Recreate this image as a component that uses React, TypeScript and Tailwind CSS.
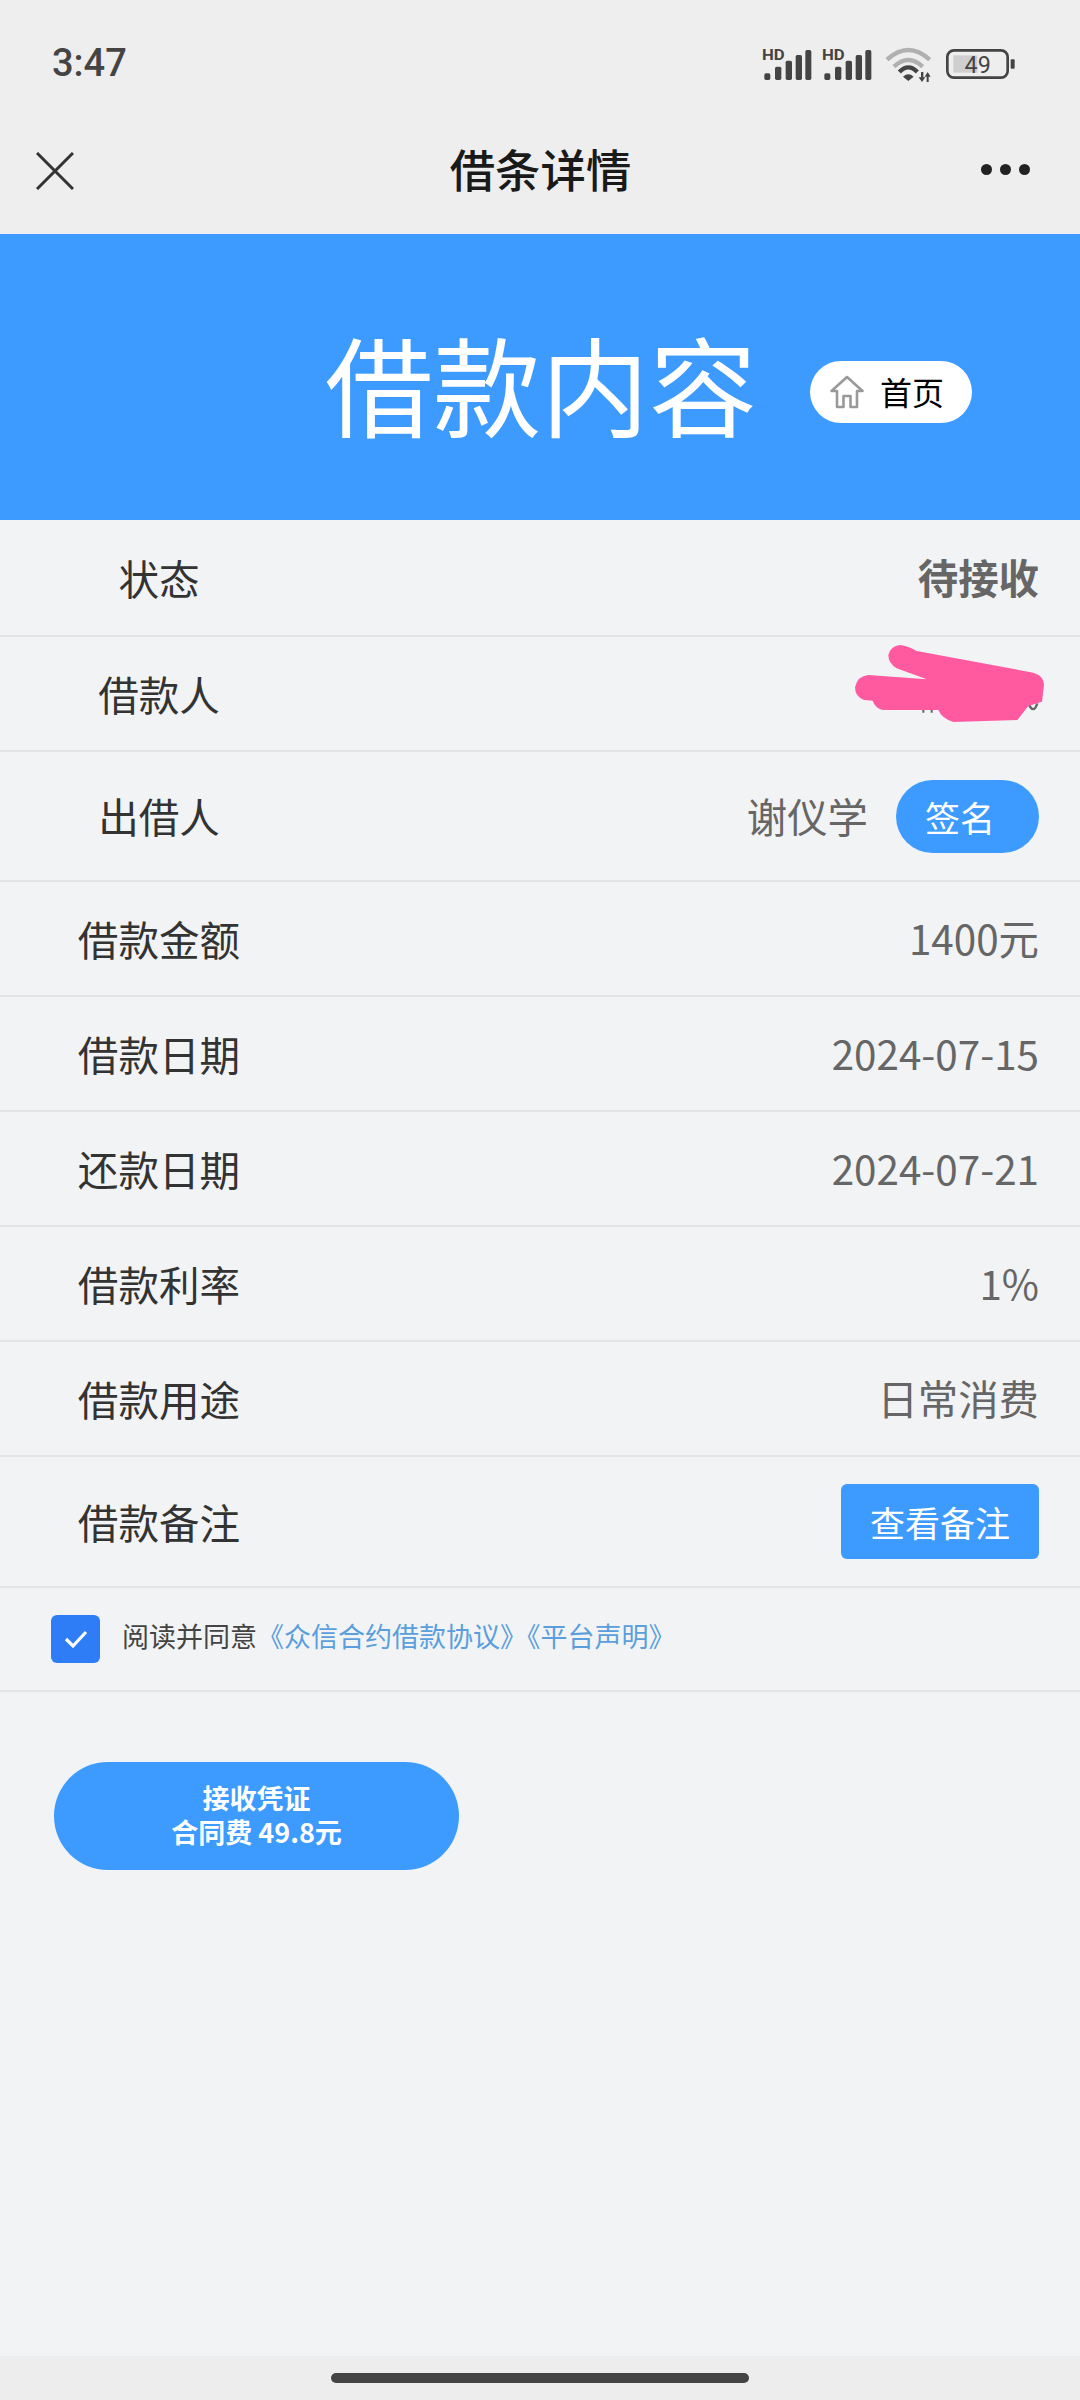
const FONT = '"Noto Sans CJK SC", "Noto Sans", sans-serif';

function StatusIcons() {
  const bars = (o: number) => (
    <g fill="#444">
      <rect x={o + 73} y={130} width={18} height={20} rx={5} />
      <rect x={o + 105} y={110} width={19} height={40} rx={5} />
      <rect x={o + 137} y={92} width={19} height={58} rx={5} />
      <rect x={o + 167} y={75} width={19} height={75} rx={5} />
      <rect x={o + 196} y={60} width={18} height={90} rx={5} />
      <text x={o + 66} y={90} fontSize={46} fontWeight={700} fontFamily="Roboto, sans-serif" textLength={68} lengthAdjust="spacingAndGlyphs">HD</text>
    </g>
  );
  return (
    <svg width={300} height={70} viewBox="0 0 900 210" className="shrink-0">
      {bars(0)}
      {bars(180)}
      <g fill="none" strokeLinecap="butt">
        <path d="M441 89 Q505 31 569 89" stroke="#b0b0b0" strokeWidth={13} />
        <path d="M462 110 Q505 70 548 110" stroke="#b0b0b0" strokeWidth={13} />
        <path d="M478 126 Q505 98 532 126" stroke="#444" strokeWidth={13} />
      </g>
      <path d="M489 140 Q505 126 521 140 L505 153 Z" fill="#444" />
      <path d="M543 126 H550 V142 H556 L546 156 L536 142 H543 Z" fill="#444" />
      <path d="M560 156 H566 V140 H572 L563 126 L554 140 H560 Z" fill="#444" />
      <rect x={622} y={61} width={181} height={82} rx={20} fill="none" stroke="#444" strokeWidth={8} />
      <rect x={640} y={76} width={72} height={52} fill="#cfcfcf" />
      <rect x={812} y={88} width={12} height={28} rx={3} fill="#444" />
      <text x={713} y={128} textAnchor="middle" fontSize={70} fill="#444" fontFamily="Roboto, sans-serif">49</text>
    </svg>
  );
}

function Row({ label, children, h = "h-[115px]" }: { label: string; children: React.ReactNode; h?: string }) {
  return (
    <div className={`flex items-center border-b-2 border-[#e3e4e6] ${h}`}>
      <div className="w-[318px] pt-[1px] text-center text-[40.6px] leading-none text-[#333333]">{label}</div>
      <div className="flex flex-1 items-center justify-end pr-[41px] text-[40.4px] leading-none text-[#666666]">
        {children}
      </div>
    </div>
  );
}

export default function App() {
  return (
    <div className="relative flex h-[2400px] w-[1080px] flex-col overflow-hidden bg-[#f2f3f5]" style={{ fontFamily: FONT }}>
      <div className="flex h-[234px] flex-col bg-[#eeeeee]">
        <div className="flex h-[115px] items-start justify-between pl-[52px] pr-[40px] pt-[30px]">
          <span className="text-[38px] font-medium leading-[66px] text-[#444444]" style={{ fontFamily: "Roboto, sans-serif" }}>3:47</span>
          <StatusIcons />
        </div>
        <div className="flex h-[119px] items-start pl-[36px] pr-[50px] pt-[37px]">
          <div className="flex-1">
            <svg width={38} height={38} viewBox="0 0 38 38" fill="none" stroke="#333" strokeWidth={3}>
              <path d="M1 1 L37 37 M37 1 L1 37" />
            </svg>
          </div>
          <span className="-mt-[17px] ml-[15px] text-[45.4px] font-medium leading-[66px] text-[#1a1a1a]">借条详情</span>
          <div className="mt-[12px] flex flex-1 justify-end gap-[8px]">
            <span className="h-[11px] w-[11px] rounded-full bg-[#222222]" />
            <span className="h-[11px] w-[11px] rounded-full bg-[#222222]" />
            <span className="h-[11px] w-[11px] rounded-full bg-[#222222]" />
          </div>
        </div>
      </div>

      <div className="flex h-[286px] items-center bg-[#3d9bff] pl-[325px]">
        <span className="mt-[10px] text-[108px] leading-none text-white">借款内容</span>
        <div className="ml-[53px] mt-[30px] flex h-[62px] w-[162px] items-center rounded-full bg-white pl-[20px]">
          <svg width={34} height={34} viewBox="0 0 34 34" fill="none" stroke="#999" strokeWidth={2.6} strokeLinejoin="round">
            <path d="M1.5 16 L17 2 L32.5 16 H27 V32 H20.5 V21 H13.5 V32 H7 V16 Z" />
          </svg>
          <span className="-mt-[2px] ml-[16px] text-[32px] leading-none text-black">首页</span>
        </div>
      </div>

      <div className="flex flex-col">
        <Row label="状态" h="h-[117px]"><span className="font-bold">待接收</span></Row>
        <Row label="借款人"><span /></Row>
        <Row label="出借人" h="h-[130px]">
          <span>谢仪学</span>
          <span className="ml-[28px] flex h-[73px] w-[143px] items-center rounded-full bg-[#3d9bff] pl-[29px] text-[35px] text-white">签名</span>
        </Row>
        <Row label="借款金额">1400元</Row>
        <Row label="借款日期">2024-07-15</Row>
        <Row label="还款日期">2024-07-21</Row>
        <Row label="借款利率">1%</Row>
        <Row label="借款用途">日常消费</Row>
        <Row label="借款备注" h="h-[131px]">
          <span className="flex h-[75px] w-[198px] items-center justify-center rounded-[6px] bg-[#3d9bff] text-[35px] text-white">查看备注</span>
        </Row>
        <div className="flex h-[104px] items-center border-b-2 border-[#e3e4e6] pl-[51px]">
          <div className="flex h-[48px] w-[49px] items-center justify-center rounded-[6px] bg-[#2e7cf6]">
            <svg width={24} height={20} viewBox="0 0 24 20" fill="none" stroke="#fff" strokeWidth={3.2}>
              <path d="M2 10 L9 17 L22 3" />
            </svg>
          </div>
          <span className="-mt-[8px] ml-[22px] text-[27px] leading-none text-[#444444]">阅读并同意</span>
          <span className="-mt-[8px] text-[27px] leading-none text-[#5a9fdc]">《众信合约借款协议》《平台声明》</span>
        </div>
      </div>

      <div className="ml-[54px] mt-[70px] flex h-[108px] w-[405px] items-center justify-center rounded-full bg-[#3d9bff] pb-[3px] text-center text-[27px] font-semibold leading-[34px] text-white">
        <span>
          接收凭证
          <br />
          合同费 49.8元
        </span>
      </div>

      <div className="mt-auto flex h-[44px] items-start justify-center bg-[#ededed] pt-[17px]">
        <div className="h-[10px] w-[418px] rounded-full bg-[#444444]" />
      </div>

      <svg className="absolute left-[760px] top-[340px]" width={320} height={400} viewBox="0 0 960 1200">
        <path d="M805 1090 Q820 1125 832 1090" fill="none" stroke="#666" strokeWidth={7} />
        <path d="M490 1100 V1118 M515 1100 V1118" fill="none" stroke="#666" strokeWidth={6} />
        <path fill="#ff5aa0" d="M420 915 Q445 918 470 933 L820 998 Q852 1008 852 1035 L846 1085 L805 1098 L772 1140 L580 1146 Q545 1135 535 1110 L370 1110 Q345 1105 338 1082 L312 1080 Q285 1070 285 1042 Q292 1008 325 1005 L500 1018 L410 985 Q385 970 385 945 Q392 918 420 915 Z" />
      </svg>
    </div>
  );
}
